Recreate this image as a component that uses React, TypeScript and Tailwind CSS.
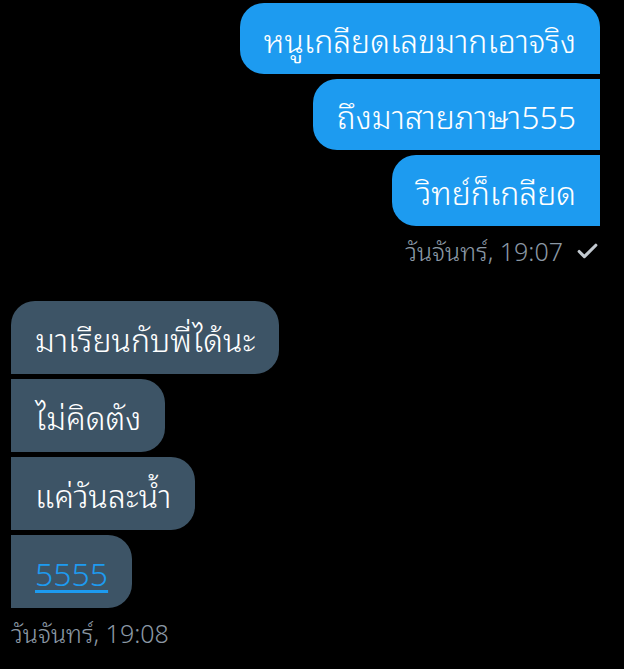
import React from "react";
import { Check } from "lucide-react";

const font = { fontFamily: '"Noto Sans Thai Looped", "Noto Sans Thai", "Noto Sans", sans-serif' };

const sent = ["หนูเกลียดเลขมากเอาจริง", "ถึงมาสายภาษา555", "วิทย์ก็เกลียด"];
const received = ["มาเรียนกับพี่ได้นะ", "ไม่คิดตัง", "แค่วันละน้ำ"];

export default function App() {
  return (
    <div className="w-[624px] h-[669px] bg-black overflow-hidden text-white font-light" style={font}>
      {/* sent */}
      <div className="flex flex-col items-end pr-[24px] pt-[3px] gap-[5px]">
        {sent.map((t, i) => (
          <div
            key={t}
            className={
              "h-[71px] flex items-center px-6 bg-[#1d9bf0] text-[32px] rounded-l-[24px] " +
              (i === 0 ? "rounded-tr-[24px]" : "")
            }
          >
            {t}
          </div>
        ))}
        <div className="flex items-center gap-3 h-[40px] text-[25px] text-[#8b98a5]">
          <span>วันจันทร์, 19:07</span>
          <Check className="w-[25px] h-[25px] text-[#c2c9d0]" strokeWidth={3} />
        </div>
      </div>

      {/* received */}
      <div className="flex flex-col items-start pl-[11px] mt-[30px] gap-[5px]">
        {received.map((t, i) => (
          <div
            key={t}
            className={
              "h-[73px] flex items-center px-6 bg-[#3d5466] text-[32px] rounded-r-[24px] " +
              (i === 0 ? "rounded-tl-[24px]" : "")
            }
          >
            {t}
          </div>
        ))}
        <div className="h-[73px] flex items-center px-6 bg-[#3d5466] text-[32px] rounded-r-[24px]">
          <a className="text-[#1d9bf0] underline underline-offset-4">5555</a>
        </div>
        <div className="h-[40px] flex items-center text-[25px] text-[#8b98a5]">วันจันทร์, 19:08</div>
      </div>
    </div>
  );
}
